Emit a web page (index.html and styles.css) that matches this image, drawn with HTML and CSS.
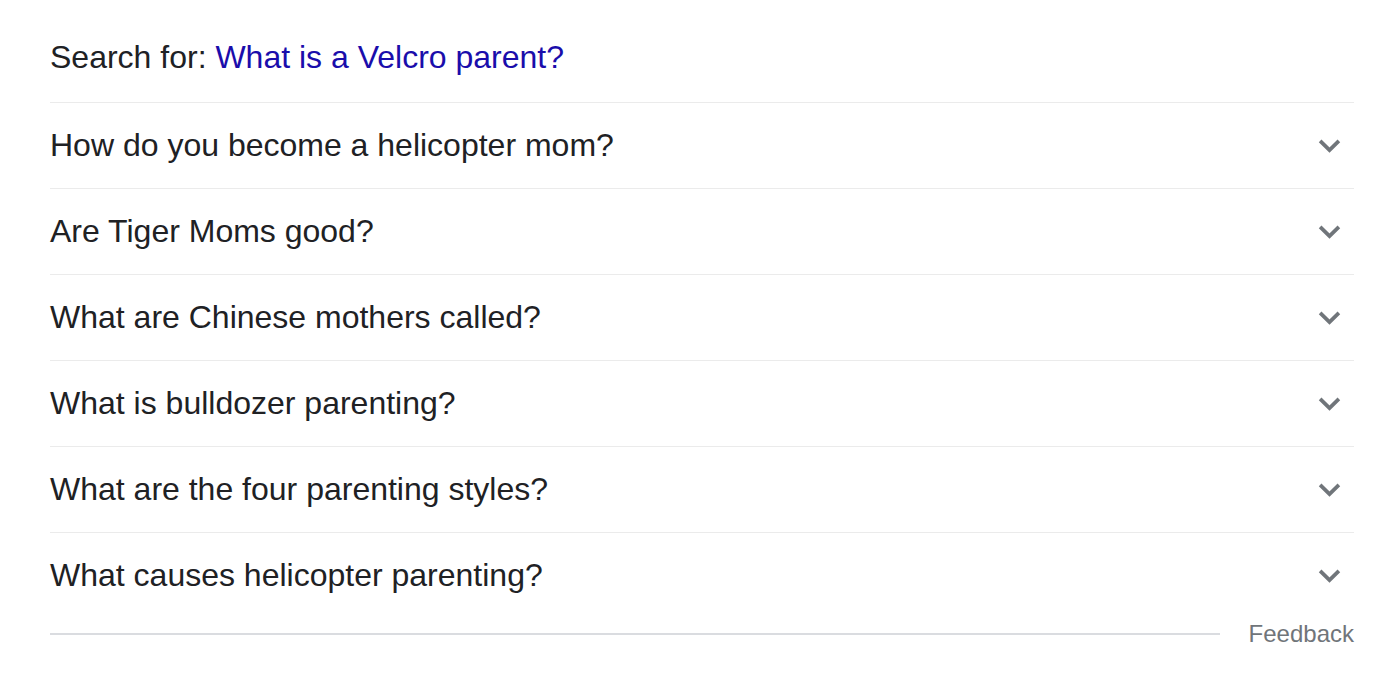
FILE: index.html
```html
<!DOCTYPE html>
<html>
<head>
<meta charset="utf-8">
<link rel="stylesheet" href="styles.css">
</head>
<body>
<div class="panel">
  <div class="search-for">Search for: <a class="query" href="#">What is a Velcro parent?</a></div>
  <div class="row"><span class="q">How do you become a helicopter mom?</span><svg class="chev" viewBox="0 0 24 24"><path d="M3 7.5 L12 16.5 L21 7.5"/></svg></div>
  <div class="row"><span class="q">Are Tiger Moms good?</span><svg class="chev" viewBox="0 0 24 24"><path d="M3 7.5 L12 16.5 L21 7.5"/></svg></div>
  <div class="row"><span class="q">What are Chinese mothers called?</span><svg class="chev" viewBox="0 0 24 24"><path d="M3 7.5 L12 16.5 L21 7.5"/></svg></div>
  <div class="row"><span class="q">What is bulldozer parenting?</span><svg class="chev" viewBox="0 0 24 24"><path d="M3 7.5 L12 16.5 L21 7.5"/></svg></div>
  <div class="row"><span class="q">What are the four parenting styles?</span><svg class="chev" viewBox="0 0 24 24"><path d="M3 7.5 L12 16.5 L21 7.5"/></svg></div>
  <div class="row last"><span class="q">What causes helicopter parenting?</span><svg class="chev" viewBox="0 0 24 24"><path d="M3 7.5 L12 16.5 L21 7.5"/></svg></div>
  <div class="footer"><div class="line"></div><span class="feedback">Feedback</span></div>
</div>
</body>
</html>
```
FILE: styles.css
```css
html, body { margin: 0; padding: 0; background: #fff; }
body { font-family: "Liberation Sans", Arial, sans-serif; color: #202124; }
.panel { width: 1304px; margin-left: 50px; }
.search-for {
  font-size: 32px; line-height: 36px;
  padding-top: 39px; padding-bottom: 27px;
  border-bottom: 1px solid #ebebeb;
  color: #202124;
}
.query { color: #1a0dab; text-decoration: none; }
.row {
  height: 85px; display: flex; align-items: center; justify-content: space-between;
  border-bottom: 1px solid #ebebeb;
  font-size: 32px;
}
.row.last { border-bottom: none; }
.chev { width: 25px; height: 25px; margin-right: 12px; fill: none; stroke: #70757a; stroke-width: 3.6; }
.footer { display: flex; align-items: center; height: 32px; margin-top: 0; }
.line { flex: 1; height: 2px; background: #dadce0; margin-right: 29px; }
.feedback { font-size: 24px; color: #70757a; }
```
